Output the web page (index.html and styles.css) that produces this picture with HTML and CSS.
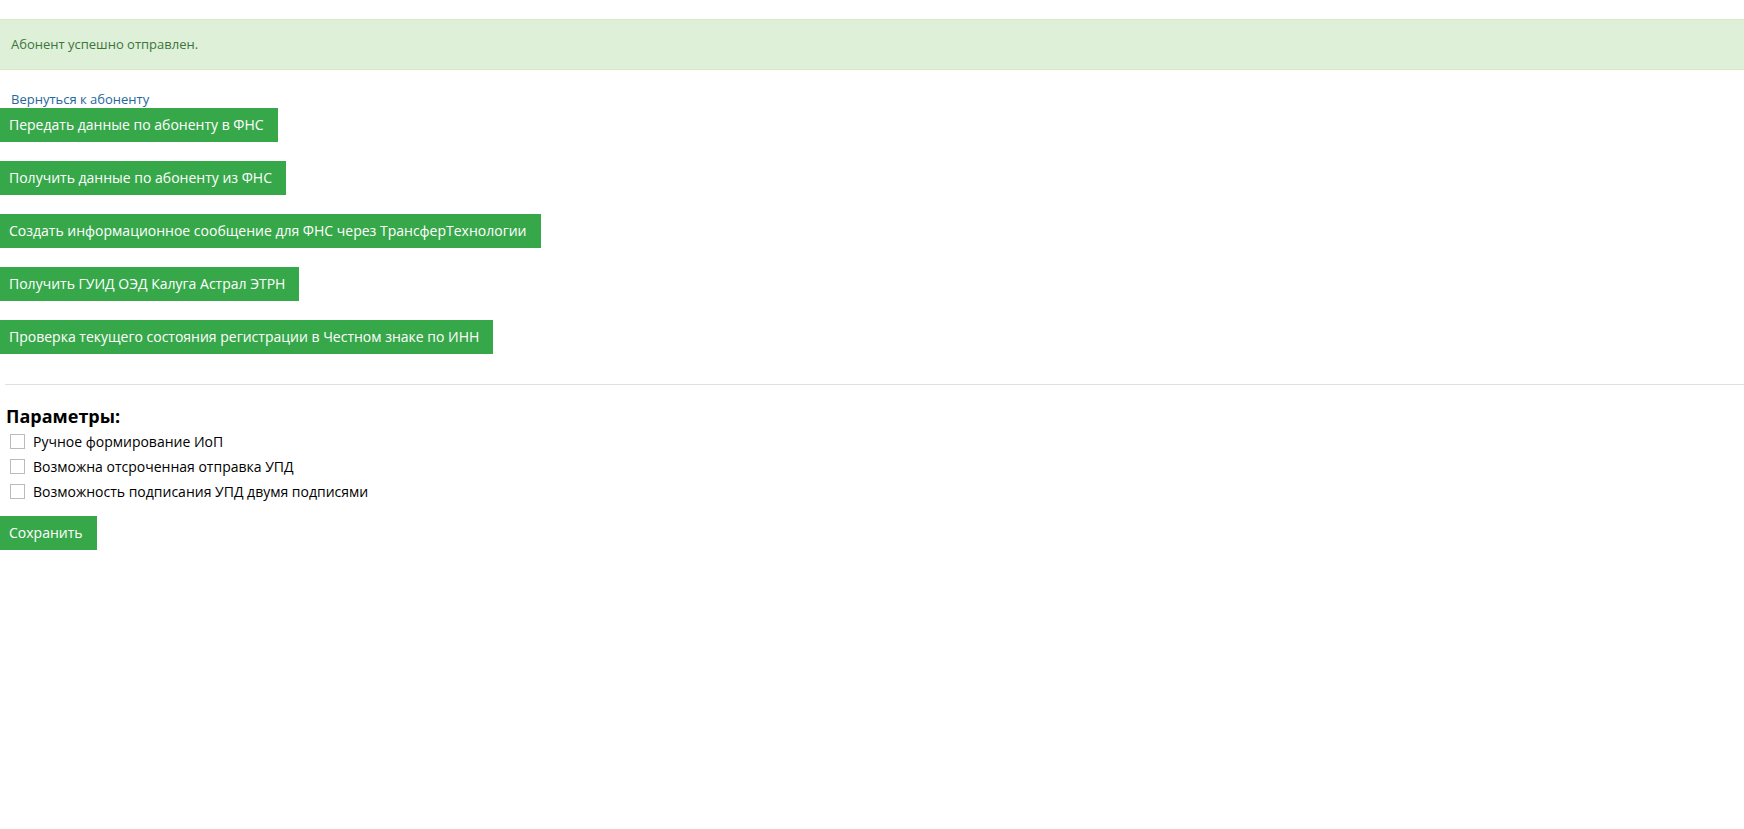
FILE: index.html
```html
<!DOCTYPE html>
<html lang="ru">
<head>
    <meta charset="UTF-8">
    <meta name="viewport" content="width=device-width, initial-scale=1.0">
    <title>Абонент</title>
    <link rel="stylesheet" href="styles.css">
</head>
<body>
    <div class="alert-success">Абонент успешно отправлен.</div>

    <a class="back-link" href="#">Вернуться к абоненту</a>

    <div class="actions">
        <button class="btn-green">Передать данные по абоненту в ФНС</button>
        <button class="btn-green">Получить данные по абоненту из ФНС</button>
        <button class="btn-green">Создать информационное сообщение для ФНС через ТрансферТехнологии</button>
        <button class="btn-green">Получить ГУИД ОЭД Калуга Астрал ЭТРН</button>
        <button class="btn-green">Проверка текущего состояния регистрации в Честном знаке по ИНН</button>
    </div>

    <hr class="divider">

    <form class="params">
        <h3 class="params-title">Параметры:</h3>
        <label class="param-row"><input type="checkbox"> Ручное формирование ИоП</label>
        <label class="param-row"><input type="checkbox"> Возможна отсроченная отправка УПД</label>
        <label class="param-row"><input type="checkbox"> Возможность подписания УПД двумя подписями</label>
        <button type="button" class="btn-green save">Сохранить</button>
    </form>
</body>
</html>
```

FILE: styles.css
```css
body {
    font-family: "Open Sans", Arial, sans-serif;
    font-size: 13px;
    color: #000;
    margin: 0;
    padding-top: 19px;
    background: #fff;
}

.alert-success {
    background: #dff0d8;
    border-top: 1px solid #d6e9c6;
    border-bottom: 1px solid #d6e9c6;
    color: #3c763d;
    padding: 15px 11px;
    line-height: 19px;
    margin-bottom: 20px;
}

.back-link {
    display: block;
    padding-left: 11px;
    line-height: 18px;
    color: #23689b;
    text-decoration: none;
}

.actions {
    display: flex;
    flex-direction: column;
    align-items: flex-start;
    gap: 19px;
}

.btn-green {
    background: #37a84a;
    color: #fff;
    border: none;
    border-radius: 0;
    font-family: "Open Sans", Arial, sans-serif;
    font-size: 14px;
    line-height: 20px;
    padding: 7px 14px 7px 9px;
    cursor: pointer;
}

.divider {
    border: none;
    border-top: 1px solid #e0e0e0;
    margin: 30px 0 0 5px;
}

.params {
    padding-left: 6px;
    padding-top: 19px;
}

.params-title {
    font-size: 18px;
    font-weight: bold;
    margin: 0 0 1px;
    line-height: 24px;
}

.param-row {
    display: flex;
    align-items: center;
    gap: 8px;
    font-size: 14px;
    line-height: 20px;
    height: 25px;
    padding-left: 4px;
}

.param-row input {
    appearance: none;
    width: 15px;
    height: 15px;
    margin: 0;
    border: 1px solid #bbb;
    background: #fff;
}

.param-row input:checked {
    background: #37a84a;
}

.save {
    margin: 12px 0 0 -6px;
}
```
